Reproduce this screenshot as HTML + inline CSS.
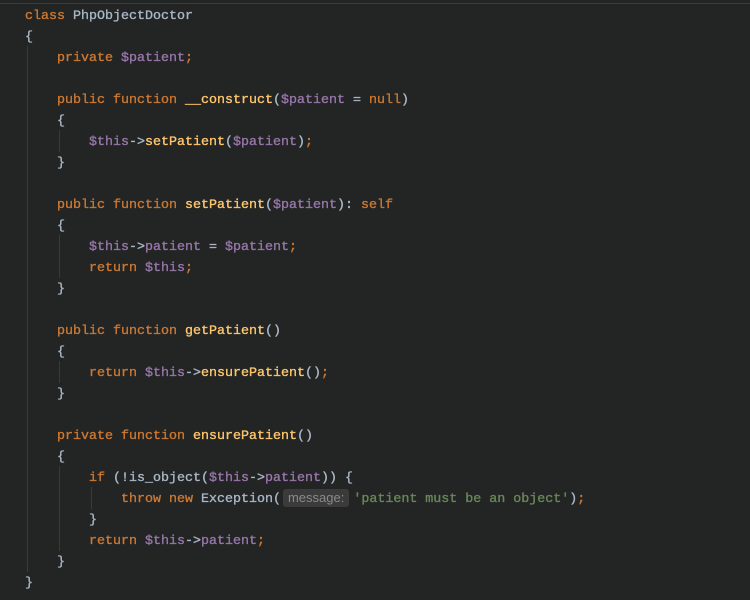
<!DOCTYPE html>
<html><head><style>
html,body{margin:0;padding:0;background:#232525;width:750px;height:600px;overflow:hidden}
.top{position:absolute;left:0;top:3px;width:750px;height:1px;background:#3a3c3c}
pre{position:absolute;left:25px;top:6px;margin:0;font-family:"Liberation Mono",monospace;font-size:13.33px;line-height:21px;color:#a9b7c6;white-space:pre;-webkit-text-stroke:0.35px}
.k{color:#cc7832}.v{color:#9876aa}.f{color:#ffc66d}.s{color:#6a8759}
.h{display:inline-block;background:#3b3b3b;color:#8a8a8a;font-family:"Liberation Sans",sans-serif;font-size:13px;line-height:18px;padding:0 5px;border-radius:3px;margin:0 4px 0 2px;-webkit-text-stroke:0}
.g{position:absolute;width:1px;background:#393b3b}
</style></head><body>
<div class="top"></div>
<div class="g" style="left:27px;top:46px;height:526px"></div>
<div class="g" style="left:59px;top:130px;height:22px"></div>
<div class="g" style="left:59px;top:235px;height:43px"></div>
<div class="g" style="left:59px;top:361px;height:22px"></div>
<div class="g" style="left:59px;top:466px;height:85px"></div>
<div class="g" style="left:91px;top:487px;height:22px"></div>
<pre><span class="k">class</span> PhpObjectDoctor
{
    <span class="k">private</span> <span class="v">$patient</span><span class="k">;</span>

    <span class="k">public function</span> <span class="f">__construct</span>(<span class="v">$patient</span> = <span class="k">null</span>)
    {
        <span class="v">$this</span>-><span class="f">setPatient</span>(<span class="v">$patient</span>)<span class="k">;</span>
    }

    <span class="k">public function</span> <span class="f">setPatient</span>(<span class="v">$patient</span>): <span class="k">self</span>
    {
        <span class="v">$this</span>-><span class="v">patient</span> = <span class="v">$patient</span><span class="k">;</span>
        <span class="k">return</span> <span class="v">$this</span><span class="k">;</span>
    }

    <span class="k">public function</span> <span class="f">getPatient</span>()
    {
        <span class="k">return</span> <span class="v">$this</span>-><span class="f">ensurePatient</span>()<span class="k">;</span>
    }

    <span class="k">private function</span> <span class="f">ensurePatient</span>()
    {
        <span class="k">if</span> (!is_object(<span class="v">$this</span>-><span class="v">patient</span>)) {
            <span class="k">throw new</span> Exception(<span class="h">message:</span><span class="s">'patient must be an object'</span>)<span class="k">;</span>
        }
        <span class="k">return</span> <span class="v">$this</span>-><span class="v">patient</span><span class="k">;</span>
    }
}</pre>
</body></html>
